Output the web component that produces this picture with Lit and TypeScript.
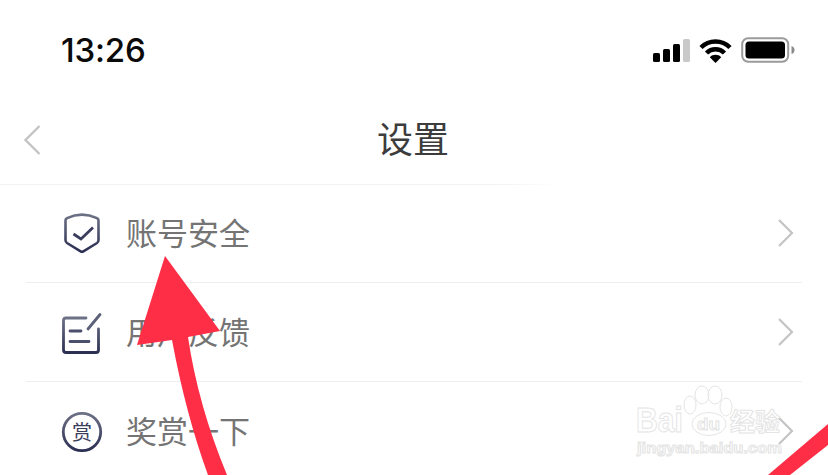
import { LitElement, html, css, svg } from "lit";
import { customElement } from "lit/decorators.js";

const chevron = html`<svg class="chevron" width="17" height="30" viewBox="0 0 17 30">
  <path d="M2 2l13 13L2 28" fill="none" stroke="#c4c4c4" stroke-width="2.2" />
</svg>`;

const gradient = (id: string) => svg`<defs>
  <linearGradient id=${id} x1="0" y1="0" x2="0" y2="1">
    <stop offset="0" stop-color="#6d7186" />
    <stop offset="1" stop-color="#2b2f52" />
  </linearGradient>
</defs>`;

const shieldIcon = html`<svg width="44" height="44" viewBox="0 0 44 44">
  ${gradient("g1")}
  <path d="M5.5 9.500Q5.500 7.800 7 7.200Q22 0 37 7.200Q38.500 7.800 38.500 9.500V29Q38.500 31 37 32L23 40.500Q22 41 21 40.500L7 32Q5.500 31 5.500 29Z"
    fill="none" stroke="url(#g1)" stroke-width="2.600" />
  <path d="M13.500 23l7.500 5L33 16.500" fill="none" stroke="#3a3e5c" stroke-width="2.800" />
</svg>`;

const noteIcon = html`<svg width="44" height="44" viewBox="0 0 44 44">
  ${gradient("g2")}
  <path d="M26 8H6Q3.500 8 3.500 10.500V40Q3.500 42.500 6 42.500H36Q38.500 42.500 38.500 40V19"
    fill="none" stroke="url(#g2)" stroke-width="2.800" stroke-linecap="round" />
  <path d="M28 19L40 4.500" fill="none" stroke="#5c6078" stroke-width="2.800" stroke-linecap="round" />
  <path d="M10 21H21M10 31.500H29" fill="none" stroke="#4b4f6c" stroke-width="2.800" stroke-linecap="round" />
</svg>`;

const rewardIcon = html`<svg width="44" height="44" viewBox="0 0 44 44">
  ${gradient("g3")}
  <circle cx="22" cy="23" r="18.700" fill="none" stroke="url(#g3)" stroke-width="2.800" />
  <text x="22" y="30.500" text-anchor="middle" class="reward">赏</text>
</svg>`;

@customElement("app-root")
export class AppRoot extends LitElement {
  static styles = css`
    :host {
      display: block;
      position: relative;
      width: 828px;
      height: 475px;
      overflow: hidden;
      background: #fff;
      font-family: "Noto Sans CJK SC", "Liberation Sans", sans-serif;
    }
    .status {
      height: 100px;
      display: flex;
      align-items: center;
      justify-content: space-between;
      padding: 0 33px 0 61px;
      box-sizing: border-box;
    }
    .time {
      font-family: Inter, "Liberation Sans", sans-serif;
      font-size: 33px;
      font-weight: 500;
      color: #0a0a0a;
      letter-spacing: -0.2px;
    }
    .indicators {
      display: flex;
      align-items: center;
      gap: 9px;
    }
    .nav {
      height: 85px;
      position: relative;
      display: flex;
      align-items: center;
      justify-content: center;
      box-sizing: border-box;
      border-bottom: 1px solid;
      border-image: linear-gradient(to right, #f2f2f2 0, #f2f2f2 500px, #fff 560px) 1;
    }
    .back {
      position: absolute;
      left: 23px;
      top: 24px;
    }
    .title {
      font-size: 36px;
      font-weight: 400;
      color: #3c3c3c;
      line-height: 1;
      padding: 0 2px 10px 0;
    }
    .list {
      margin-top: -1px;
    }
    .row {
      height: 98px;
      margin: 0 26px;
      padding: 0 8px 0 34px;
      display: flex;
      align-items: center;
      gap: 22px;
      border-bottom: 1px solid #eeeeee;
    }
    .row:last-child {
      border-bottom: none;
    }
    .row svg {
      flex: none;
    }
    .label {
      flex: 1;
      font-size: 31px;
      font-weight: 400;
      color: #747474;
      line-height: 1;
      padding-bottom: 4px;
    }
    .reward {
      font-size: 20px;
      fill: #3a3e5c;
      font-family: "Noto Sans CJK SC", sans-serif;
    }
    .overlay {
      position: absolute;
      inset: 0;
      pointer-events: none;
    }
    .wm {
      fill: #fff;
      fill-opacity: 0.55;
      stroke: #e4e4e4;
      stroke-width: 1;
      font-family: "Liberation Sans", sans-serif;
      font-weight: 700;
    }
    .wm-cjk {
      font-family: "Noto Sans CJK SC", sans-serif;
    }
  `;

  render() {
    return html`
      <div class="status">
        <span class="time">13:26</span>
        <div class="indicators">
          <svg width="37" height="24" viewBox="0 0 37 24">
            <rect x="0" y="15" width="7" height="9" rx="1.500" fill="#000" />
            <rect x="10" y="11" width="7" height="13" rx="1.500" fill="#000" />
            <rect x="20" y="6" width="7" height="18" rx="1.500" fill="#000" />
            <rect x="30" y="1" width="7" height="23" rx="1.500" fill="#c9c9c9" />
          </svg>
          <svg width="33" height="25" viewBox="0 0 33 25">
            <path d="M2 9.500C10 1.500 23 1.500 31 9.500" fill="none" stroke="#000" stroke-width="4.500" />
            <path d="M7.500 15C12.500 10 20.500 10 25.500 15" fill="none" stroke="#000" stroke-width="4.500" />
            <path d="M10.800 19.200C14 16 19 16 22.200 19.200L16.500 25Z" fill="#000" />
          </svg>
          <svg width="54" height="26" viewBox="0 0 54 26">
            <rect x="1.200" y="1.200" width="46" height="23.600" rx="6" fill="none" stroke="#9a9a9a" stroke-width="2" />
            <rect x="4.500" y="4.500" width="39.500" height="17" rx="3.500" fill="#000" />
            <path d="M50.500 9Q53.500 10 53.500 13T50.500 17Z" fill="#8a8a8a" />
          </svg>
        </div>
      </div>
      <div class="nav">
        <svg class="back" width="19" height="32" viewBox="0 0 19 32">
          <path d="M16.500 2L2.500 16l14 14" fill="none" stroke="#c4c4c4" stroke-width="2.400" />
        </svg>
        <span class="title">设置</span>
      </div>
      <div class="list">
        <div class="row">${shieldIcon}<span class="label">账号安全</span>${chevron}</div>
        <div class="row">${noteIcon}<span class="label">用户反馈</span>${chevron}</div>
        <div class="row">${rewardIcon}<span class="label">奖赏一下</span>${chevron}</div>
      </div>

      <svg class="overlay" width="828" height="475" viewBox="0 0 828 475">
        <g class="wm">
          <text x="636" y="432" font-size="35" textLength="47" lengthAdjust="spacingAndGlyphs">Bai</text>
          <ellipse cx="690" cy="405" rx="6" ry="9" />
          <ellipse cx="702" cy="395" rx="7" ry="9" />
          <ellipse cx="715" cy="395" rx="7" ry="9" />
          <ellipse cx="726" cy="407" rx="6" ry="9" />
          <ellipse cx="709" cy="424" rx="17" ry="11.500" />
          <text x="697" y="430" font-size="17" textLength="23" lengthAdjust="spacingAndGlyphs">du</text>
          <text class="wm-cjk" x="730" y="431" font-size="25">经验</text>
          <text x="637" y="453" font-size="15" textLength="145" lengthAdjust="spacingAndGlyphs">jingyan.baidu.com</text>
        </g>
        <path d="M165 256L220 331L188 337Q198 405 227 475H208Q186 415 172 340L137 345Z" fill="#fd2e46" />
        <path d="M828 424V445L790 475H768Z" fill="#fd2e46" />
      </svg>
    `;
  }
}
